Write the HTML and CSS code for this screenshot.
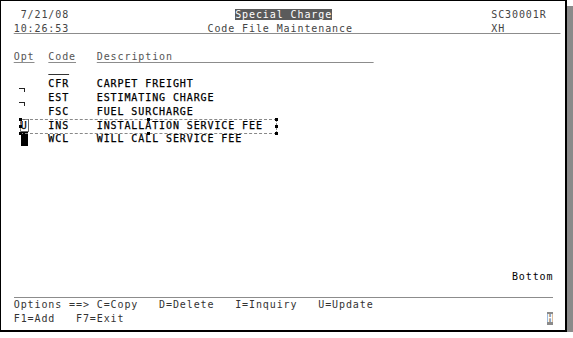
FILE: index.html
```html
<!DOCTYPE html>
<html lang="en">
<head>
    <meta charset="UTF-8">
    <meta name="viewport" content="width=device-width, initial-scale=1.0">
    <title>Special Charge - Code File Maintenance</title>
    <link rel="stylesheet" href="styles.css">
</head>
<body>
    <div class="screen">
        <div class="row hdr">  7/21/08                        <span class="title">Special Charge</span>                       SC30001R</div>
        <div class="row hdr"> <span class="ul">10:26:53                    Code File Maintenance                    XH        </span></div>
        <div class="row"></div>
        <div class="row colhdr"> <span class="ul">Opt</span>  <span class="ul">Code</span>   <span class="ul">Description                             </span></div>
        <div class="row">      <span class="ul pos">   </span></div>
        <div class="row data">      CFR    CARPET FREIGHT</div>
        <div class="row data">  <span class="opt mark"> </span>   EST    ESTIMATING CHARGE</div>
        <div class="row data">  <span class="opt mark"> </span>   FSC    FUEL SURCHARGE</div>
        <div class="row data">  <span class="opt picked">U</span>   INS    INSTALLATION SERVICE FEE</div>
        <div class="row data">  <span class="opt cursor"> </span>   WCL    WILL CALL SERVICE FEE</div>
        <div class="row"></div>
        <div class="row"></div>
        <div class="row"></div>
        <div class="row"></div>
        <div class="row"></div>
        <div class="row"></div>
        <div class="row"></div>
        <div class="row"></div>
        <div class="row"></div>
        <div class="row more">Bottom </div>
        <div class="row"><div class="rule"></div></div>
        <div class="row keys"> Options ==> C=Copy   D=Delete   I=Inquiry   U=Update</div>
        <div class="row keys split"><span> F1=Add   F7=Exit</span><span><span class="ind">H</span> </span></div>

        <div class="sel-box">
            <span class="handle h-tl"></span><span class="handle h-tm"></span><span class="handle h-tr"></span>
            <span class="handle h-ml"></span><span class="handle h-mr"></span>
            <span class="handle h-bl"></span><span class="handle h-bm"></span><span class="handle h-br"></span>
        </div>
    </div>
</body>
</html>
```

FILE: styles.css
```css
:root {
    --cw: 6.92px;   /* one 5250 column */
    --rh: 13.8px;   /* one 5250 row */
    --line-gray: #8c8c8c;
}
body { margin: 0; background: #fff; }
.screen {
    position: relative; box-sizing: border-box; width: 567px; height: 332px;
    border: 1px solid #000; border-right-width: 2px; border-bottom-width: 2px;
    box-shadow: 6px 6px 0 #8a8a8a; background: #fff;
    padding: 7.3px 0 0 5.8px;
    font-family: "DejaVu Sans Mono", monospace; font-size: 10px; letter-spacing: 0.9px;
    color: #111;
}
.row { height: var(--rh); line-height: var(--rh); white-space: pre; width: calc(80 * var(--cw)); }
.hdr { color: #444; }
.colhdr { color: #555; }
.data { color: #000; -webkit-text-stroke: 0.25px #000; }
.title { background: #5b5b5b; color: #fff; }
.ul { text-decoration: underline; text-decoration-color: var(--line-gray); text-decoration-thickness: 1px; text-underline-offset: 1px; }
.colhdr .ul { text-underline-offset: 2px; }
.pos { text-decoration-color: #333; }
.opt { position: relative; }
.mark::before {
    content: ""; position: absolute; left: -2px; top: -4px; width: 5px; height: 3px;
    border-top: 1px solid #222; border-right: 1px solid #222;
}
.picked { outline: 1px solid #666; outline-offset: 0; }
.cursor { display: inline-block; height: var(--rh); background: #000; vertical-align: top; }
.more { text-align: right; color: #000; }
.rule { box-sizing: border-box; height: var(--rh); margin-left: var(--cw); width: calc(78 * var(--cw)); border-bottom: 1px solid var(--line-gray); }
.keys { color: #333; }
.split { display: flex; justify-content: space-between; }
.ind {
    display: inline-block; width: var(--cw); height: 13px; line-height: 13px; vertical-align: top;
    letter-spacing: 0; text-align: center; background: #8a8a8a; color: #fff; font-weight: bold;
}

/* selection frame drawn over the INS row */
.sel-box { position: absolute; left: 19px; top: 118px; width: 255px; height: 13px; border: 1px dashed #888; }
.handle { position: absolute; width: 3px; height: 3px; background: #000; }
.h-tl, .h-tm, .h-tr { top: -2px; }
.h-ml, .h-mr { top: 5px; }
.h-bl, .h-bm, .h-br { bottom: -2px; }
.h-tl, .h-ml, .h-bl { left: -2px; }
.h-tm, .h-bm { left: 126px; }
.h-tr, .h-mr, .h-br { right: -2px; }
```
